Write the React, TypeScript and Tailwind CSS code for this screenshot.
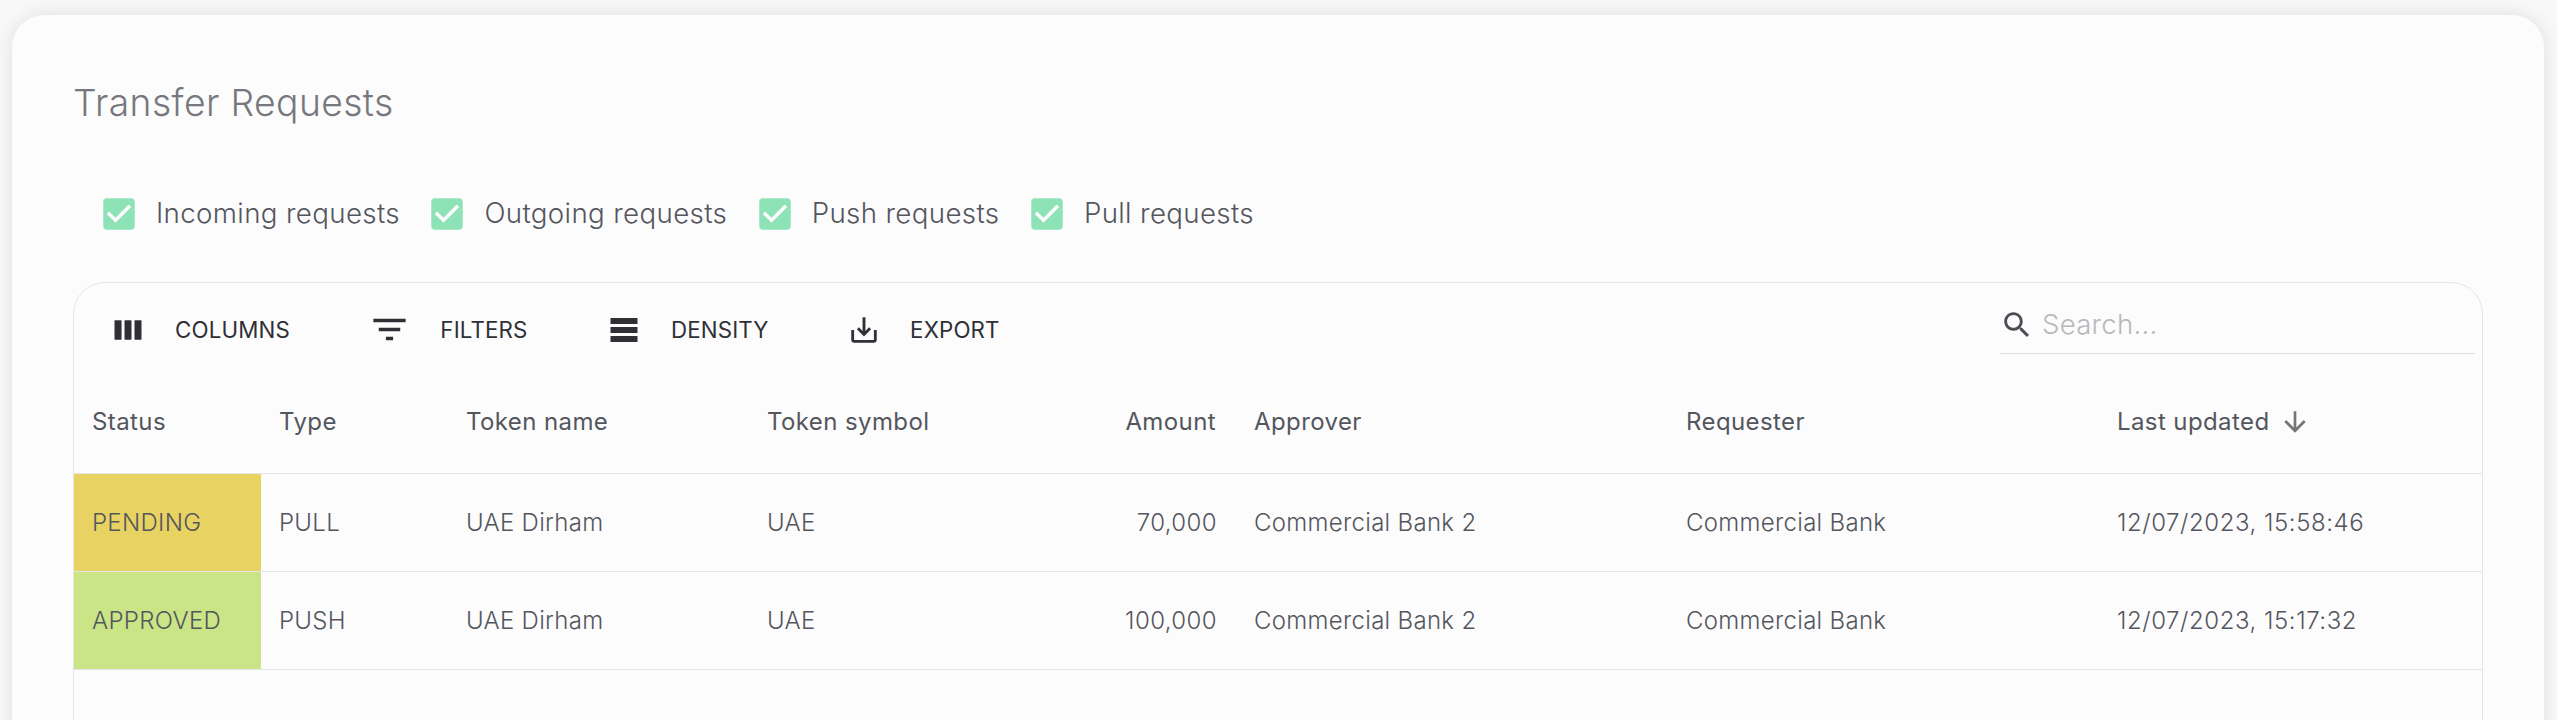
const ICONS = {
  columns: "M3.3 5.5h4.1a.3.3 0 0 1 .3.3v12.4a.3.3 0 0 1-.3.3H3.3a.3.3 0 0 1-.3-.3V5.8a.3.3 0 0 1 .3-.3zm6.67 0h4.06a.3.3 0 0 1 .3.3v12.4a.3.3 0 0 1-.3.3H9.97a.3.3 0 0 1-.3-.3V5.8a.3.3 0 0 1 .3-.3zm6.66 0h4.07a.3.3 0 0 1 .3.3v12.4a.3.3 0 0 1-.3.3h-4.07a.3.3 0 0 1-.3-.3V5.8a.3.3 0 0 1 .3-.3z",
  filters: "M10 18h4v-2h-4v2zM3 6v2h18V6H3zm3 7h12v-2H6v2z",
  density: "M21 8H3V4h18v4zm0 2H3v4h18v-4zm0 6H3v4h18v-4z",
  export: "M19 12v7H5v-7H3v7c0 1.1.9 2 2 2h14c1.1 0 2-.9 2-2v-7h-2zm-6 .67l2.59-2.58L17 11.5l-5 5-5-5 1.41-1.41L11 12.67V3h2z",
  search: "M15.5 14h-.79l-.28-.27C15.41 12.59 16 11.11 16 9.5 16 5.91 13.09 3 9.5 3S3 5.91 3 9.5 5.91 16 9.5 16c1.61 0 3.09-.59 4.23-1.57l.27.28v.79l5 4.99L20.49 19l-4.99-5zm-6 0C7.01 14 5 11.99 5 9.5S7.01 5 9.5 5 14 7.01 14 9.5 11.99 14 9.5 14z",
  arrow: "M20 12l-1.41-1.41L13 16.17V4h-2v12.17l-5.58-5.59L4 12l8 8 8-8z",
  check: "M19 3H5c-1.11 0-2 .9-2 2v14c0 1.1.89 2 2 2h14c1.1 0 2-.9 2-2V5c0-1.11-.9-2-2-2zm-9 14l-5-5 1.41-1.41L10 14.17l7.59-7.59L19 8l-9 9z",
};

function Icon({ d, className }: { d: string; className: string }) {
  return (
    <svg viewBox="0 0 24 24" fill="currentColor" className={className}>
      <path d={d} />
    </svg>
  );
}

const filters = ["Incoming requests", "Outgoing requests", "Push requests", "Pull requests"];

const toolbar = [
  { label: "COLUMNS", icon: ICONS.columns, size: "h-[36px] w-[36px]" },
  { label: "FILTERS", icon: ICONS.filters, size: "h-[43px] w-[43px]" },
  { label: "DENSITY", icon: ICONS.density, size: "h-[36px] w-[36px]" },
  { label: "EXPORT", icon: ICONS.export, size: "h-[34px] w-[34px]" },
];

const rows = [
  { status: "PENDING", statusColor: "bg-[#e8d362]", type: "PULL", amount: "70,000", updated: "12/07/2023, 15:58:46" },
  { status: "APPROVED", statusColor: "bg-[#c9e586]", type: "PUSH", amount: "100,000", updated: "12/07/2023, 15:17:32" },
];

const gridCols = "grid grid-cols-[187px_187px_301px_244px_243px_432px_431px_1fr]";
const cell = "flex items-center px-[18px] whitespace-nowrap";

export default function App() {
  return (
    <div className="h-[720px] overflow-hidden bg-[#f8f8f8] pl-[12px] pr-[13px] pt-[15px] font-['Inter',sans-serif] text-[24px] text-[#54565e]">
      <div className="h-[800px] rounded-t-[32px] bg-[#fcfcfc] px-[61px] pt-[61px] shadow-[0_0_18px_rgba(0,0,0,0.1)]">
        <h1 className="text-[37.25px] leading-[54px] font-light tracking-[0.4px] text-[#77787e]">Transfer Requests</h1>

        <div className="mt-[62px] flex h-[44px] items-center pl-[30px]">
          {filters.map((f) => (
            <label key={f} className="mr-[31.5px] flex items-center gap-[21px] text-[27.7px] font-light tracking-[0.35px]">
              <Icon d={ICONS.check} className="-mx-[5px] h-[42px] w-[42px] text-[#8de3b6]" />
              <span>{f}</span>
            </label>
          ))}
        </div>

        <div className="mt-[46px] h-[700px] rounded-t-[32px] border border-[#e4e5e6]">
          <div className="flex h-[90px] items-start justify-between pr-[7px]">
            <div className="flex items-center pl-[36px] pt-[25px] text-[22.3px] tracking-[0.15px] text-[#2e3036]">
              {toolbar.map((t) => (
                <div key={t.label} className="mr-[78.5px] flex items-center gap-[29px]">
                  <Icon d={t.icon} className={`shrink-0 ${t.size}`} />
                  <span>{t.label}</span>
                </div>
              ))}
            </div>
            <div className="mt-[14px] flex h-[57px] w-[475px] items-center gap-[8px] border-b border-[#dfe0e2]">
              <Icon d={ICONS.search} className="h-[34px] w-[34px] text-[#4b4d55]" />
              <span className="text-[27.6px] font-light tracking-[0.25px] text-[#b8b9bc]">Search...</span>
            </div>
          </div>

          <div className={`${gridCols} h-[101px] border-b border-[#e4e5e6] pb-[2px] tracking-[0.4px]`}>
            <div className={cell}>Status</div>
            <div className={cell}>Type</div>
            <div className={cell}>Token name</div>
            <div className={cell}>Token symbol</div>
            <div className={`${cell} justify-end pr-[20px]`}>Amount</div>
            <div className={cell}>Approver</div>
            <div className={cell}>Requester</div>
            <div className={`${cell} gap-[10px]`}>
              Last updated
              <Icon d={ICONS.arrow} className="h-[32px] w-[32px] text-[#757575]" />
            </div>
          </div>

          {rows.map((r) => (
            <div key={r.status} className={`${gridCols} h-[98px] border-b border-[#e4e5e6] font-light tracking-[0.3px]`}>
              <div className={`${cell} ${r.statusColor}`}>{r.status}</div>
              <div className={cell}>{r.type}</div>
              <div className={cell}>UAE Dirham</div>
              <div className={cell}>UAE</div>
              <div className={`${cell} justify-end pr-[19px] tracking-[0.4px]`}>{r.amount}</div>
              <div className={cell}>Commercial Bank 2</div>
              <div className={cell}>Commercial Bank</div>
              <div className={`${cell} tracking-[0.55px]`}>{r.updated}</div>
            </div>
          ))}
        </div>
      </div>
    </div>
  );
}
